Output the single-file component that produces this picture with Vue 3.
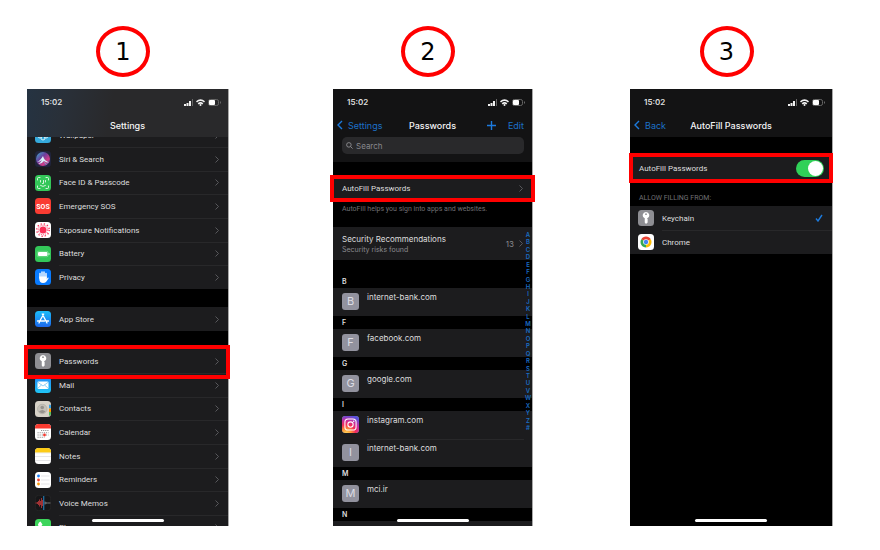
<script setup>
import { ref } from 'vue'

const autofill = ref(true)
const query = ref('')

const icons = {
  wallpaper: '<rect width="32" height="32" rx="7" fill="#35aadc"/><g fill="none" stroke="#d5f1fb" stroke-width="2"><circle cx="16" cy="15" r="4"/><circle cx="10" cy="18" r="4"/><circle cx="22" cy="18" r="4"/><circle cx="16" cy="22" r="4"/></g>',
  siri: '<defs><linearGradient id="siri" x1="0" y1="0" x2="1" y2="1"><stop offset="0" stop-color="#3bb4cf"/><stop offset=".4" stop-color="#6a3f9e"/><stop offset=".7" stop-color="#d23d86"/><stop offset="1" stop-color="#2854b8"/></linearGradient></defs><rect width="32" height="32" rx="7" fill="#20243c"/><circle cx="16" cy="16" r="14" fill="url(#siri)"/><path d="M4 22Q10 20 16 10Q18 19 28 23Q22 23 18 20Q12 27 7 26Q12 22 14 18Q10 22 4 22Z" fill="#d8f1fa"/><path d="M17 19Q20 28 24 27Q20 25 17 19Z" fill="#57d1e3"/>',
  face: '<rect width="32" height="32" rx="7" fill="#34c759"/><g fill="none" stroke="#fff" stroke-width="1.6" stroke-linecap="round"><path d="M5 10V7Q5 5 7 5H10M22 5H25Q27 5 27 7V10M27 22V25Q27 27 25 27H22M10 27H7Q5 27 5 25V22M11 11V14M21 11V14M17 11V17H15M11 21Q16 25 21 21"/></g>',
  sos: '<rect width="32" height="32" rx="7" fill="#fa3c32"/><text x="16" y="21" text-anchor="middle" font-size="14" font-weight="700" font-family="Roboto, sans-serif" fill="#fff">SOS</text>',
  exposure: '<rect width="32" height="32" rx="7" fill="#fff"/><circle cx="16" cy="16" r="7" fill="#fb2d55"/><circle cx="16" cy="16" r="9.5" fill="none" stroke="#fb2d55" stroke-width="2" stroke-dasharray="2 2.26"/><circle cx="16" cy="16" r="12.5" fill="none" stroke="#fb2d55" stroke-width="2.6" stroke-dasharray="2.6 3.95"/>',
  battery: '<rect width="32" height="32" rx="7" fill="#34c759"/><rect x="4.500" y="10.500" width="22" height="11" rx="3" fill="none" stroke="#a6e6b5"/><rect x="6" y="12" width="19" height="8" rx="2" fill="#fff"/><path d="M28 14V18" stroke="#c9f0d2" stroke-width="2"/>',
  privacy: '<rect width="32" height="32" rx="7" fill="#097bff"/><path d="M10 18V9M14 16V6M18 16V6M22 18V9" stroke="#fff" stroke-width="2.800" stroke-linecap="round"/><path d="M8.600 15H23.400V20L26 17Q28 17 27 19L22 26Q20 28 16 28Q9 28 8.600 20Z" fill="#fff"/>',
  store: '<defs><linearGradient id="store" x2="0" y2="1"><stop stop-color="#1bbcf8"/><stop offset="1" stop-color="#1c68ed"/></linearGradient></defs><rect width="32" height="32" rx="7" fill="url(#store)"/><path d="M17.500 6L9 21M14.500 6L24 24M5 20H19M23 20H27M8 24L9 22" fill="none" stroke="#fff" stroke-width="2.600" stroke-linecap="round"/>',
  key: '<rect width="32" height="32" rx="7" fill="#8e8e93"/><path fill-rule="evenodd" d="M16 4A6.500 6.500 0 0 1 18.500 16.500V18L20 20L18.500 22L20 24L16 28L13.500 25V16.500A6.500 6.500 0 0 1 16 4ZM16 6.500A1.700 1.700 0 0 0 16 10A1.700 1.700 0 0 0 16 6.500Z" fill="#fff"/>',
  mail: '<defs><linearGradient id="mail" x2="0" y2="1"><stop stop-color="#2289f4"/><stop offset="1" stop-color="#20c5f5"/></linearGradient></defs><rect width="32" height="32" rx="7" fill="url(#mail)"/><rect x="5" y="9" width="22" height="15" rx="2" fill="#fff"/><path d="M5 10L16 18L27 10M5 23L13 16M27 23L19 16" fill="none" stroke="#49b0ee" stroke-width="1.200"/>',
  contacts: '<rect width="32" height="32" rx="7" fill="#d7d2c8"/><path d="M28 7H31Q32 8 32 10V13H28Z" fill="#9a9a98"/><path d="M28 8H32V15H28Z" fill="#36a4e8"/><path d="M28 15H32V22H28Z" fill="#ff9500"/><path d="M28 22H32V27L28 30Z" fill="#53c05e"/><circle cx="14.500" cy="16" r="9.500" fill="#c5c1b9" stroke="#aaa7a0" stroke-width="1.200"/><circle cx="14.500" cy="13" r="3.600" fill="#96938e"/><path d="M8 21Q14.500 15 21 21Q14.500 28 8 21Z" fill="#96938e"/>',
  calendar: '<rect width="32" height="32" rx="7" fill="#fff"/><path d="M0 9V7Q0 0 7 0H25Q32 0 32 7V9Z" fill="#f83b30"/><g stroke="#777" stroke-width="1.600" stroke-dasharray="2.400 1.800"><path d="M12 13H27M5 17.500H27M5 22H27M5 26.500H19"/></g><circle cx="19" cy="22" r="2.800" fill="#f83b30"/>',
  notes: '<rect width="32" height="32" rx="7" fill="#fff"/><path d="M0 9V7Q0 0 7 0H25Q32 0 32 7V9Z" fill="#fccb17"/><path d="M0 10H32" stroke="#b9b39e" stroke-dasharray="1 1"/><path d="M0 17H32M0 25H32" stroke="#d5d5d8" stroke-width="1.200"/>',
  reminders: '<rect width="32" height="32" rx="7" fill="#fff"/><circle cx="7" cy="8" r="2.800" fill="#167efb"/><circle cx="7" cy="16" r="2.800" fill="#f1432f"/><circle cx="7" cy="24" r="2.800" fill="#ff9a0c"/><path d="M12 8H29M12 16H29M12 24H29" stroke="#d3d3d8" stroke-width="1.200"/>',
  voice: '<rect x=".5" y=".5" width="31" height="31" rx="7" fill="#161618" stroke="#303033"/><path d="M1 16H4M5 14V18M7 12V20M9 9V23M11 12V20M13 6V26M15 10V22" stroke="#cc3c3d" stroke-width="1.500"/><path d="M20 13V19M22 14V18M24 15V17M25 16H31" stroke="#aaa" stroke-width="1.300"/><path d="M17.500 2V30" stroke="#2793dc" stroke-width="1.800"/>',
  phone: '<rect width="32" height="32" rx="7" fill="#3dd55b"/><path d="M8 7L11 5L15 11L13 14Q15 18 19 20L22 18L27 22Q25 28 20 26Q8 22 6 11Z" fill="#fff"/>',
  chrome: '<rect width="32" height="32" rx="7" fill="#fff"/><path d="M16 16L6.500 10.500A11 11 0 0 1 25.500 10.500Z" fill="#e94335"/><path d="M16 16V27A11 11 0 0 1 6.500 10.500Z" fill="#34a853"/><path d="M16 16L25.500 10.500A11 11 0 0 1 16 27Z" fill="#fbbc05"/><circle cx="16" cy="16" r="5.600" fill="#fff"/><circle cx="16" cy="16" r="4.400" fill="#4285f4"/>',
  instagram: '<defs><radialGradient id="insta" cx=".25" cy="1.050" r="1.100"><stop stop-color="#ffdc60"/><stop offset=".25" stop-color="#fd9a35"/><stop offset=".5" stop-color="#f52c59"/><stop offset=".75" stop-color="#c42fa4"/><stop offset="1" stop-color="#5851db"/></radialGradient></defs><rect width="32" height="32" rx="6" fill="url(#insta)"/><rect x="5.500" y="5.500" width="21" height="21" rx="6" fill="none" stroke="#fff" stroke-width="2"/><circle cx="16" cy="16" r="5" fill="none" stroke="#fff" stroke-width="2"/><circle cx="22" cy="10" r="1.400" fill="#fff"/>'
}

const settings = [
  [
    ['wallpaper', 'Wallpaper'],
    ['siri', 'Siri & Search'],
    ['face', 'Face ID & Passcode'],
    ['sos', 'Emergency SOS'],
    ['exposure', 'Exposure Notifications'],
    ['battery', 'Battery'],
    ['privacy', 'Privacy']
  ],
  [['store', 'App Store']],
  [
    ['key', 'Passwords'],
    ['mail', 'Mail'],
    ['contacts', 'Contacts'],
    ['calendar', 'Calendar'],
    ['notes', 'Notes'],
    ['reminders', 'Reminders'],
    ['voice', 'Voice Memos'],
    ['phone', 'Phone']
  ]
]

const accounts = [
  { letter: 'B', sites: ['internet-bank.com'] },
  { letter: 'F', sites: ['facebook.com'] },
  { letter: 'G', sites: ['google.com'] },
  { letter: 'I', sites: ['instagram.com', 'internet-bank.com'] },
  { letter: 'M', sites: ['mci.ir'] },
  { letter: 'N', sites: [] }
]

const index = [...'ABCDEFGHIJKLMNOPQRSTUVWXYZ#']

const statusGlyphs =
  '<g fill="#f2f2f2"><rect x="0" y="5" width="2" height="2"/><rect x="2.500" y="4" width="2" height="3"/><rect x="5" y="2" width="2" height="5"/><rect x="8" y="0" width="1" height="7" fill="#666"/></g><path d="M12.500 2.800Q16.500 -.5 20.500 2.800M14.200 4.800Q16.500 3 18.800 4.800" fill="none" stroke="#f2f2f2" stroke-width="1.600"/><circle cx="16.500" cy="6" r="1" fill="#f2f2f2"/><rect x="24.500" y=".5" width="10" height="6" rx="1.800" fill="none" stroke="#666"/><rect x="25" y="1" width="6" height="5" rx="1" fill="#fff"/><path d="M36.500 2.500V4.500" stroke="#666"/>'
</script>

<template>
  <main class="guide">
    <section class="step">
      <h2 class="number">1</h2>
      <div class="phone">
        <header class="bar tinted">
          <div class="status"><span>15:02</span><svg viewBox="0 0 37 7" v-html="statusGlyphs" /></div>
          <nav class="nav"><h3>Settings</h3></nav>
        </header>
        <div class="scrolled">
          <ul v-for="(group, g) in settings" :key="g" class="group">
            <li v-for="[icon, label] in group" :key="label" class="item" :class="{ marked: icon === 'key' }">
              <a href="#" class="row">
                <svg class="icon" viewBox="0 0 32 32" v-html="icons[icon]" />
                <span class="label">{{ label }}</span>
                <svg class="chevron" viewBox="0 0 4 7"><path d="M.5 .5L3.500 3.500L.5 6.500" /></svg>
              </a>
            </li>
          </ul>
        </div>
        <div class="home"></div>
      </div>
    </section>

    <section class="step">
      <h2 class="number">2</h2>
      <div class="phone">
        <header class="bar">
          <div class="status"><span>15:02</span><svg viewBox="0 0 37 7" v-html="statusGlyphs" /></div>
          <nav class="nav">
            <a href="#" class="back"><svg viewBox="0 0 6 10"><path d="M5 1L1 5L5 9" /></svg>Settings</a>
            <h3>Passwords</h3>
            <span class="actions">
              <button type="button" aria-label="Add"><svg class="plus" viewBox="0 0 9 9"><path d="M4.500 0V9M0 4.500H9" /></svg></button>
              <button type="button">Edit</button>
            </span>
          </nav>
          <label class="search">
            <svg viewBox="0 0 8 8"><circle cx="3.300" cy="3.300" r="2.600" /><path d="M5.300 5.300L7.500 7.500" /></svg>
            <input v-model="query" type="search" placeholder="Search" aria-label="Search" />
          </label>
        </header>
        <div class="passwords">
          <div class="item marked autofill">
            <a href="#" class="row">
              <span class="label wide">AutoFill Passwords</span>
              <svg class="chevron" viewBox="0 0 4 7"><path d="M.5 .5L3.500 3.500L.5 6.500" /></svg>
            </a>
          </div>
          <p class="hint">AutoFill helps you sign into apps and websites.</p>
          <a href="#" class="security">
            <span class="summary"><strong>Security Recommendations</strong><small>Security risks found</small></span>
            <span class="count">13</span>
            <svg class="chevron" viewBox="0 0 4 7"><path d="M.5 .5L3.500 3.500L.5 6.500" /></svg>
          </a>
          <section v-for="section in accounts" :key="section.letter" class="letters">
            <h4>{{ section.letter }}</h4>
            <a v-for="site in section.sites" :key="site" href="#" class="site">
              <svg v-if="site === 'instagram.com'" class="avatar" viewBox="0 0 32 32" v-html="icons.instagram" />
              <span v-else class="avatar">{{ section.letter }}</span>
              <span class="domain">{{ site }}</span>
            </a>
          </section>
          <div class="next"></div>
          <nav class="index" aria-label="Index"><a v-for="l in index" :key="l" href="#">{{ l }}</a></nav>
        </div>
        <div class="home"></div>
      </div>
    </section>

    <section class="step">
      <h2 class="number">3</h2>
      <div class="phone">
        <header class="bar">
          <div class="status"><span>15:02</span><svg viewBox="0 0 37 7" v-html="statusGlyphs" /></div>
          <nav class="nav">
            <a href="#" class="back"><svg viewBox="0 0 6 10"><path d="M5 1L1 5L5 9" /></svg>Back</a>
            <h3>AutoFill Passwords</h3>
          </nav>
        </header>
        <div class="options">
          <label class="item marked switch">
            <span>AutoFill Passwords</span>
            <input v-model="autofill" type="checkbox" role="switch" />
          </label>
          <h4 class="caption">ALLOW FILLING FROM:</h4>
          <ul class="group">
            <li class="item">
              <button type="button" class="row">
                <svg class="icon" viewBox="0 0 32 32" v-html="icons.key" />
                <span class="label">Keychain</span>
                <svg class="check" viewBox="0 0 8 8"><path d="M1 4.500L3 7L7 1" /></svg>
              </button>
            </li>
            <li class="item">
              <button type="button" class="row">
                <svg class="icon" viewBox="0 0 32 32" v-html="icons.chrome" />
                <span class="label">Chrome</span>
              </button>
            </li>
          </ul>
        </div>
        <div class="home"></div>
      </div>
    </section>
  </main>
</template>

<style>
body {
  background: #fff;
}
</style>

<style scoped>
* {
  box-sizing: border-box;
  margin: 0;
  padding: 0;
}
svg {
  display: block;
  flex: none;
}
a {
  color: inherit;
  text-decoration: none;
}
ul {
  list-style: none;
}
button {
  border: 0;
  background: none;
  color: inherit;
  font: inherit;
}
.guide {
  display: grid;
  grid-template-columns: 201fr 105fr 199fr 98fr 202fr;
  height: 100vh;
  padding: 26px 48px 24px 27px;
  font-family: Inter, "Liberation Sans", sans-serif;
  font-size: 8px;
  color: #dededf;
}
.step {
  display: flex;
  flex-direction: column;
  min-width: 0;
  min-height: 0;
}
.step:nth-child(2) {
  grid-column: 3;
}
.step:nth-child(3) {
  grid-column: 5;
}
.number {
  display: grid;
  place-items: center;
  align-self: center;
  width: 54px;
  height: 51px;
  margin: 0 9px 12px 0;
  border: 4px solid #f00;
  border-radius: 50%;
  font: 400 24px/28px "DejaVu Sans", sans-serif;
  color: #000;
}
.phone {
  position: relative;
  display: flex;
  flex: 1;
  flex-direction: column;
  min-height: 0;
  overflow-x: visible;
  overflow-y: clip;
  background: #000;
  box-shadow: 1px 0 #a8a8a8;
}
.bar {
  position: relative;
  z-index: 1;
  flex: none;
  padding-top: 5px;
  background: #131314;
}
.tinted {
  background: linear-gradient(100deg, #253342 0, #293039 18%, #29292b 42%);
}
.status {
  display: flex;
  align-items: center;
  justify-content: space-between;
  height: 16px;
  padding: 0 7px 0 14px;
  font-size: 8px;
  font-weight: 600;
}
.status svg {
  width: 37px;
  height: 7px;
}
.nav {
  display: grid;
  grid-template-columns: 1fr auto 1fr;
  align-items: center;
  height: 27px;
  padding: 3px 4px 0;
  font-size: 9px;
}
.nav h3 {
  grid-column: 2;
  font-size: 9px;
  font-weight: 500;
  color: #f4f4f4;
}
.back {
  display: flex;
  align-items: center;
  gap: 5px;
  color: #1c70c8;
}
.back svg {
  width: 6px;
  height: 10px;
}
.back path,
.plus path,
.check path {
  fill: none;
  stroke: #1c7add;
  stroke-width: 1.4;
}
.actions {
  display: flex;
  align-items: center;
  justify-content: flex-end;
  gap: 12px;
  padding-right: 4px;
  color: #1c70c8;
}
.plus {
  width: 9px;
  height: 9px;
}
.search {
  display: flex;
  align-items: center;
  gap: 3px;
  height: 17px;
  margin: 0 8px 0 9px;
  padding: 0 4px;
  border-radius: 5px;
  background: #29292b;
}
.search svg {
  width: 7px;
  height: 7px;
  fill: none;
  stroke: #929297;
}
.search input {
  flex: 1;
  min-width: 0;
  border: 0;
  outline: 0;
  background: none;
  font: inherit;
  color: #dededf;
}
.search input::placeholder {
  color: #88888d;
}
.bar:has(.search) {
  padding-bottom: 8px;
}
.scrolled {
  display: flex;
  flex-direction: column;
  gap: 18px;
  margin-top: -14px;
}
.group {
  background: #1c1c1e;
}
.item {
  position: relative;
  height: 24px;
  font-family: Roboto, "Liberation Sans", sans-serif;
}
.scrolled .item:nth-child(3n) {
  height: 23px;
}
.row {
  display: flex;
  align-items: center;
  width: 100%;
  height: 100%;
  padding: 0 9px 0 8px;
  text-align: left;
}
.icon {
  width: 16px;
  height: 16px;
}
.label {
  display: flex;
  flex: 1;
  align-items: center;
  align-self: stretch;
  margin-left: 8px;
}
.label.wide {
  margin-left: 1px;
}
.item + .item::before {
  content: "";
  position: absolute;
  inset: 0 0 auto 32px;
  height: 1px;
  background: #28282a;
}
.chevron {
  width: 4px;
  height: 7px;
  fill: none;
  stroke: #58585c;
}
.marked::after {
  content: "";
  position: absolute;
  z-index: 2;
  inset: -4px -2px -6px -3px;
  border: 4px solid #f00;
  pointer-events: none;
}
.passwords {
  position: relative;
  padding-top: 14px;
}
.autofill {
  background: #1c1c1e;
}
.autofill::after {
  inset: -1px -3px -2px;
}
.hint {
  height: 27px;
  padding: 5px 9px 0;
  font-family: Roboto, "Liberation Sans", sans-serif;
  font-size: 7px;
  line-height: 9px;
  color: #707074;
}
.security {
  display: flex;
  align-items: center;
  height: 33px;
  padding: 0 9px;
  background: #1c1c1e;
}
.summary {
  display: flex;
  flex: 1;
  flex-direction: column;
}
.summary strong {
  font-size: 8px;
  font-weight: 400;
  line-height: 11px;
}
.summary small {
  font-size: 7px;
  line-height: 9px;
  color: #8a8a8e;
}
.count {
  margin-right: 5px;
  font-size: 8px;
  color: #8a8a8e;
}
.letters h4 {
  height: 13px;
  padding-left: 9px;
  font-size: 7px;
  font-weight: 600;
  line-height: 13px;
}
.security + .letters {
  padding-top: 15px;
}
.site {
  position: relative;
  display: flex;
  gap: 8px;
  height: 28px;
  padding: 5px 9px;
  background: #1c1c1e;
}
.site + .site::before {
  content: "";
  position: absolute;
  inset: 0 8px auto 34px;
  height: 1px;
  background: #28282a;
}
.avatar {
  flex: none;
  width: 17px;
  height: 17px;
  border-radius: 3px;
  background: #92929e;
  font-size: 11px;
  line-height: 17px;
  text-align: center;
  color: #dcdce4;
}
.domain {
  font-size: 8px;
  line-height: 9px;
}
.next {
  height: 14px;
  background: #1c1c1e;
}
.index {
  position: absolute;
  top: 69px;
  right: 1px;
  display: flex;
  flex-direction: column;
  justify-content: space-between;
  width: 6px;
  height: 200px;
  font-size: 6px;
  font-weight: 600;
  line-height: 7px;
  text-align: center;
  color: #1a6cc4;
}
.options {
  padding-top: 19px;
}
.switch {
  display: flex;
  align-items: center;
  justify-content: space-between;
  padding: 0 8px 0 9px;
  background: #1c1c1e;
}
.switch::after {
  inset: -3px -1px;
}
.switch input {
  appearance: none;
  display: flex;
  width: 28px;
  height: 17px;
  padding: 1px;
  border-radius: 9px;
  background: #39393d;
}
.switch input::before {
  content: "";
  width: 15px;
  height: 15px;
  border-radius: 50%;
  background: #fff;
}
.switch input:checked {
  justify-content: flex-end;
  background: #30d158;
}
.caption {
  height: 26px;
  padding: 14px 9px 0;
  font-family: Roboto, "Liberation Sans", sans-serif;
  font-size: 7px;
  font-weight: 400;
  line-height: 9px;
  color: #707074;
}
.check {
  width: 8px;
  height: 8px;
}
.home {
  position: absolute;
  z-index: 3;
  bottom: 4px;
  left: 50%;
  width: 72px;
  height: 3px;
  border-radius: 2px;
  background: #fff;
  transform: translateX(-50%);
}
</style>
